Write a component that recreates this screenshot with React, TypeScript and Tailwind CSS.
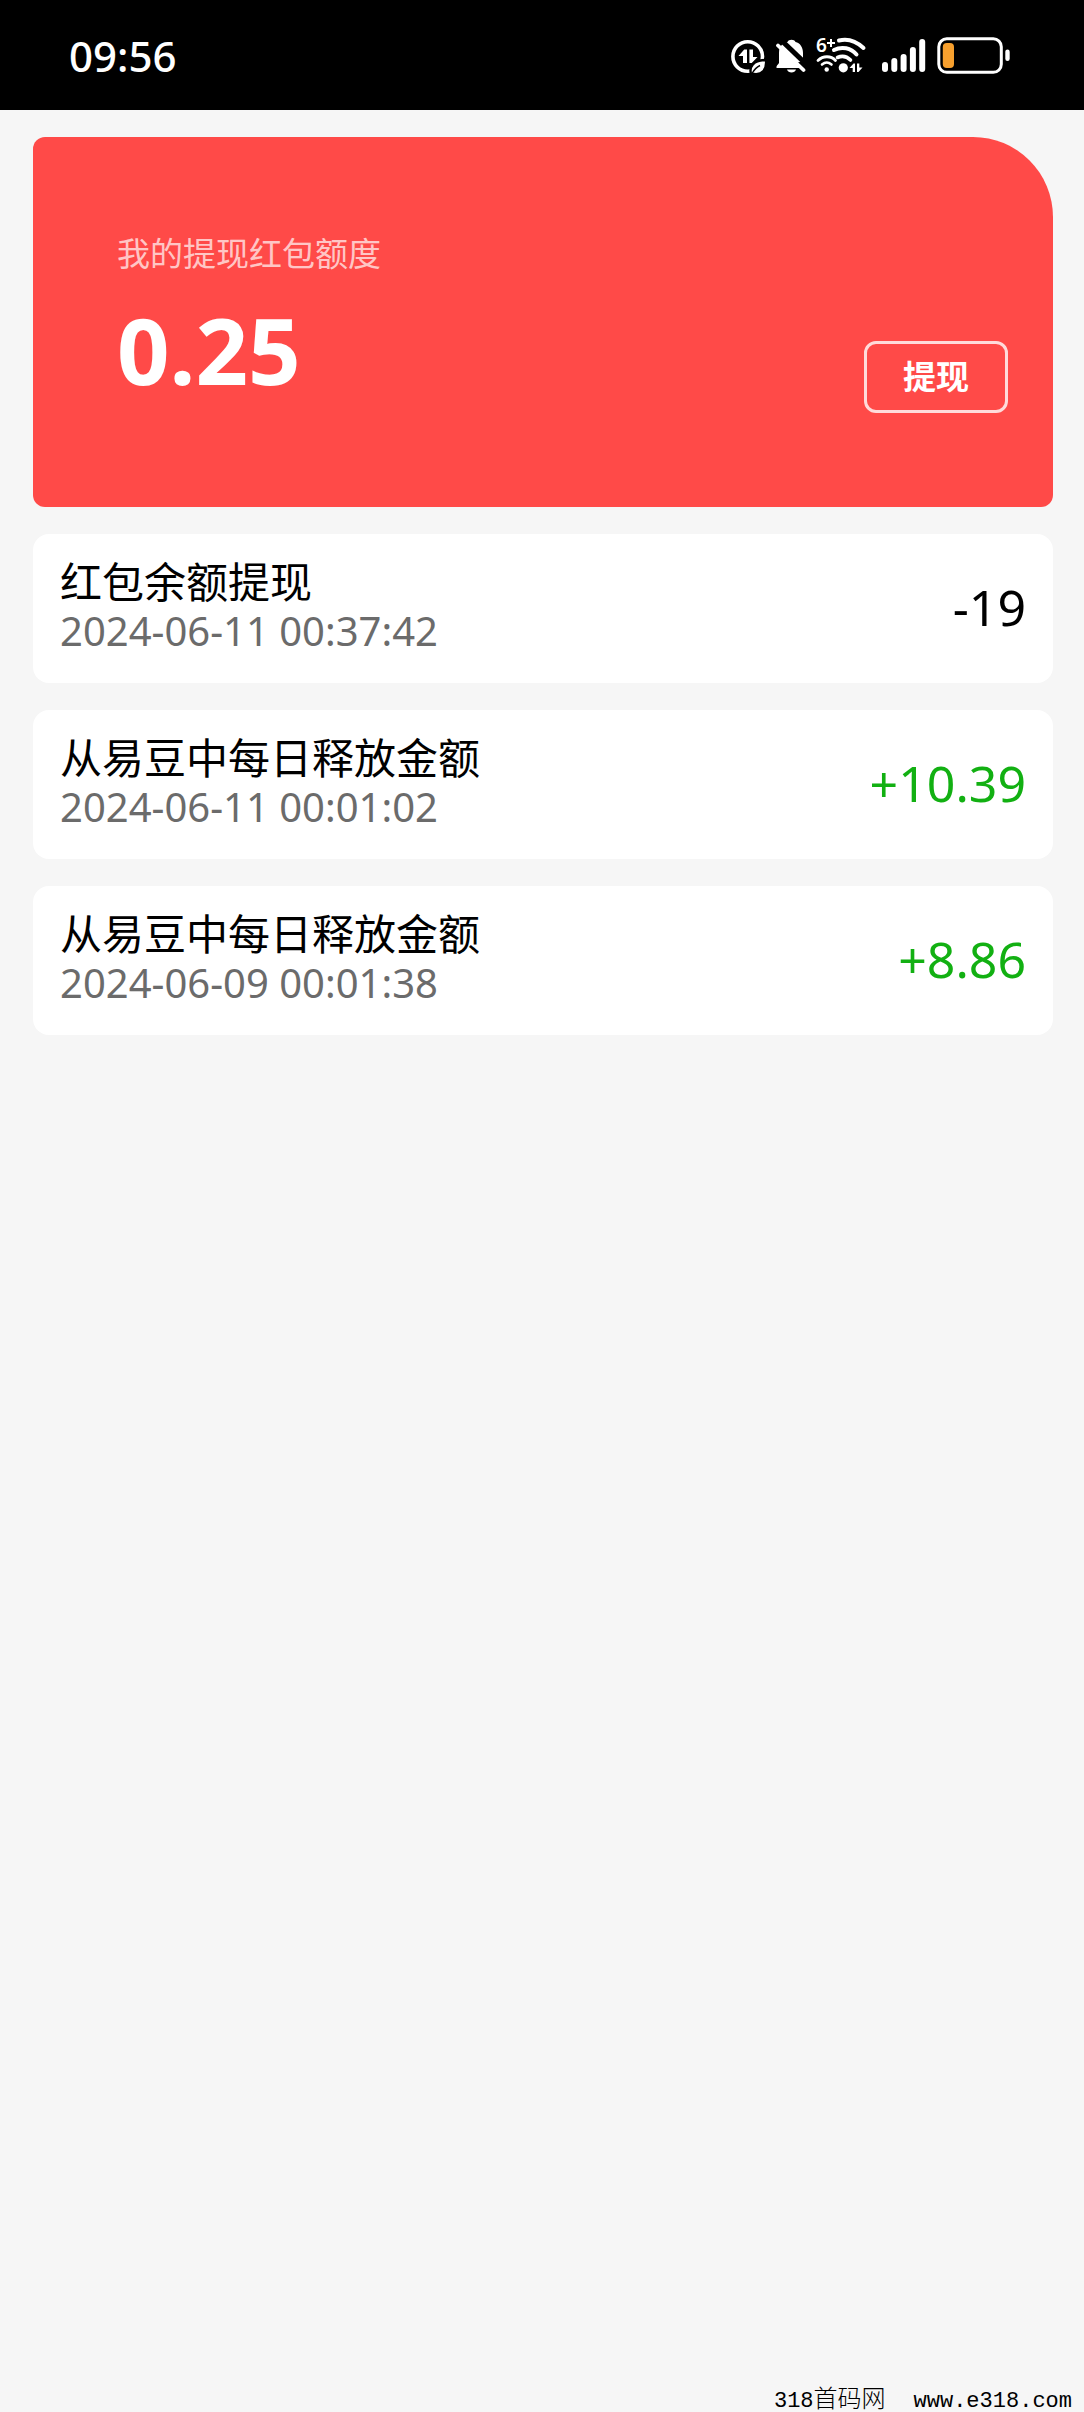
import clsx from 'clsx'

interface Transaction {
  id: number
  title: string
  time: string
  amount: string
  income: boolean
}

const transactions: Transaction[] = [
  { id: 1, title: '红包余额提现', time: '2024-06-11 00:37:42', amount: '-19', income: false },
  { id: 2, title: '从易豆中每日释放金额', time: '2024-06-11 00:01:02', amount: '+10.39', income: true },
  { id: 3, title: '从易豆中每日释放金额', time: '2024-06-09 00:01:38', amount: '+8.86', income: true },
]

function DataSaverIcon() {
  return (
    <svg className="w-9 h-10" viewBox="0 0 36 40" fill="none" aria-hidden="true">
      <circle cx="17.7" cy="21.5" r="14.8" stroke="white" strokeWidth="3.6" />
      <path d="M8.5 21 L14.2 14.5 H17 V28 H13 V21 Z" fill="white" />
      <path d="M27.5 22 L21.8 28 H19.4 V14.5 H23 V22 Z" fill="white" />
      <path d="M21 39 C19 32 23 25 36 25 C37 35 32 40 24 39 Z" fill="white" stroke="black" strokeWidth="2.4" />
      <path d="M22 38.5 C24 35 26 32.5 30 30.5" stroke="black" strokeWidth="1.4" />
    </svg>
  )
}

function MutedBellIcon() {
  return (
    <svg className="w-8 h-10" viewBox="0 0 32 40" fill="none" aria-hidden="true">
      <path
        d="M5 28 V18 C5 11 9 8 13.5 7 C14.5 4 20.5 4 21.5 7 C26 8 29 12 29 18 V27 L31 33 H2.5 C2 31 4 29.5 5 28 Z"
        fill="white"
      />
      <path d="M13 34.5 H22 C21 38.5 14 38.5 13 34.5 Z" fill="white" />
      <path d="M7 5 L34 31" stroke="black" strokeWidth="5" />
      <path d="M22 28 L30 36 L36 36 V24 Z" fill="black" />
      <path d="M4 10.5 L29.5 35" stroke="white" strokeWidth="3.8" strokeLinecap="round" />
    </svg>
  )
}

function WifiIcon() {
  return (
    <svg className="w-[52px] h-10 overflow-visible" viewBox="0 0 52 40" fill="none" aria-hidden="true">
      <text x="2" y="17" fill="white" fontSize="19" fontWeight="600" className="font-['Noto_Sans']">
        6
      </text>
      <path d="M17 4 V12 M13 8 H21" stroke="white" strokeWidth="2" />
      <g stroke="white" strokeLinecap="round">
        <path d="M25 5.5 C33 3.5 42 6 49.5 13" strokeWidth="4" />
        <path d="M20 15 C28 11 37 13 42.5 19.5" strokeWidth="4" />
        <path d="M23.5 22.5 C28 20.5 33 21.5 36.5 25" strokeWidth="3.6" />
        <path d="M4 25.5 C9 20.5 17 20.5 21.5 25.5" strokeWidth="2.8" />
        <path d="M8 29.5 C11 27 14.5 27 17.5 29.5" strokeWidth="2.6" />
      </g>
      <circle cx="12.7" cy="34.5" r="2.2" fill="white" />
      <circle cx="29.3" cy="32.8" r="4.6" fill="white" />
      <path d="M35.5 33 L39.5 28.5 H41 V37 H38.7 V33 Z" fill="white" />
      <path d="M48.5 32.5 L44.5 37 H43 V28.5 H45.3 V32.5 Z" fill="white" />
    </svg>
  )
}

function SignalIcon() {
  return (
    <svg className="w-[54px] h-10" viewBox="0 0 54 40" fill="white" aria-hidden="true">
      <rect x="8" y="27" width="6" height="10" rx="3" />
      <rect x="17.3" y="23" width="6" height="14" rx="3" />
      <rect x="26.6" y="19" width="6" height="18" rx="3" />
      <rect x="35.9" y="12" width="6" height="25" rx="3" />
      <rect x="45.2" y="4" width="6" height="33" rx="3" />
    </svg>
  )
}

function BatteryIcon() {
  return (
    <svg className="w-[76px] h-10" viewBox="0 0 76 40" fill="none" aria-hidden="true">
      <rect x="2.8" y="3.8" width="62.5" height="33.5" rx="8" stroke="white" strokeWidth="3" />
      <rect x="6.8" y="8" width="11.2" height="25" rx="4" fill="#f7a02e" />
      <rect x="69.3" y="14.5" width="4.4" height="11.5" rx="2.2" fill="white" />
    </svg>
  )
}

function StatusBar() {
  return (
    <header className="flex h-[110px] items-center justify-between bg-black pr-[72px] pl-[69px] text-white">
      <time className="pt-0.5 text-[42px] font-medium leading-none">09:56</time>
      <div className="flex items-center gap-2">
        <DataSaverIcon />
        <MutedBellIcon />
        <WifiIcon />
        <SignalIcon />
        <BatteryIcon />
      </div>
    </header>
  )
}

function BalanceCard() {
  return (
    <section className="flex items-end justify-between rounded-xl rounded-tr-[80px] bg-[#ff4a48] pt-[92px] pr-[45px] pb-[94px] pl-[84px] text-white">
      <div className="pb-1">
        <h1 className="text-[33px] leading-[50px] text-white/70">我的提现红包额度</h1>
        <p className="mt-3 text-[92px] font-bold leading-[118px]">0.25</p>
      </div>
      <button
        type="button"
        className="h-[72px] w-36 rounded-xl border-3 border-white/80 pb-0.5 text-[33px] font-bold leading-none"
      >
        提现
      </button>
    </section>
  )
}

function TransactionCard({ item }: { item: Transaction }) {
  return (
    <li className="flex items-center justify-between rounded-2xl bg-white px-[27px] pt-6 pb-[27px]">
      <div>
        <h2 className="font-['Lato','Noto_Sans_CJK_SC',sans-serif] text-[42px] leading-[48px] text-black">
          {item.title}
        </h2>
        <p className="text-[40px] leading-[50px] text-[#6b6b6b]">{item.time}</p>
      </div>
      <span className={clsx('text-[50px] leading-none', item.income ? 'text-[#12b012]' : 'text-black')}>
        {item.amount}
      </span>
    </li>
  )
}

export default function App() {
  return (
    <div className="flex min-h-screen flex-col bg-[#f6f6f6] font-['Noto_Sans','Noto_Sans_CJK_SC',sans-serif]">
      <StatusBar />
      <main className="flex flex-col gap-[27px] pt-[27px] pr-[31px] pl-[33px]">
        <BalanceCard />
        <ul className="flex flex-col gap-[27px]">
          {transactions.map((item) => (
            <TransactionCard key={item.id} item={item} />
          ))}
        </ul>
      </main>
      <footer className="mt-auto flex items-baseline justify-end gap-7 pr-3 font-['Liberation_Mono','Noto_Sans_CJK_SC',monospace] text-[22px] leading-5 text-black">
        <span>
          318<span className="text-[24px] font-light">首码网</span>
        </span>
        <span>www.e318.com</span>
      </footer>
    </div>
  )
}
